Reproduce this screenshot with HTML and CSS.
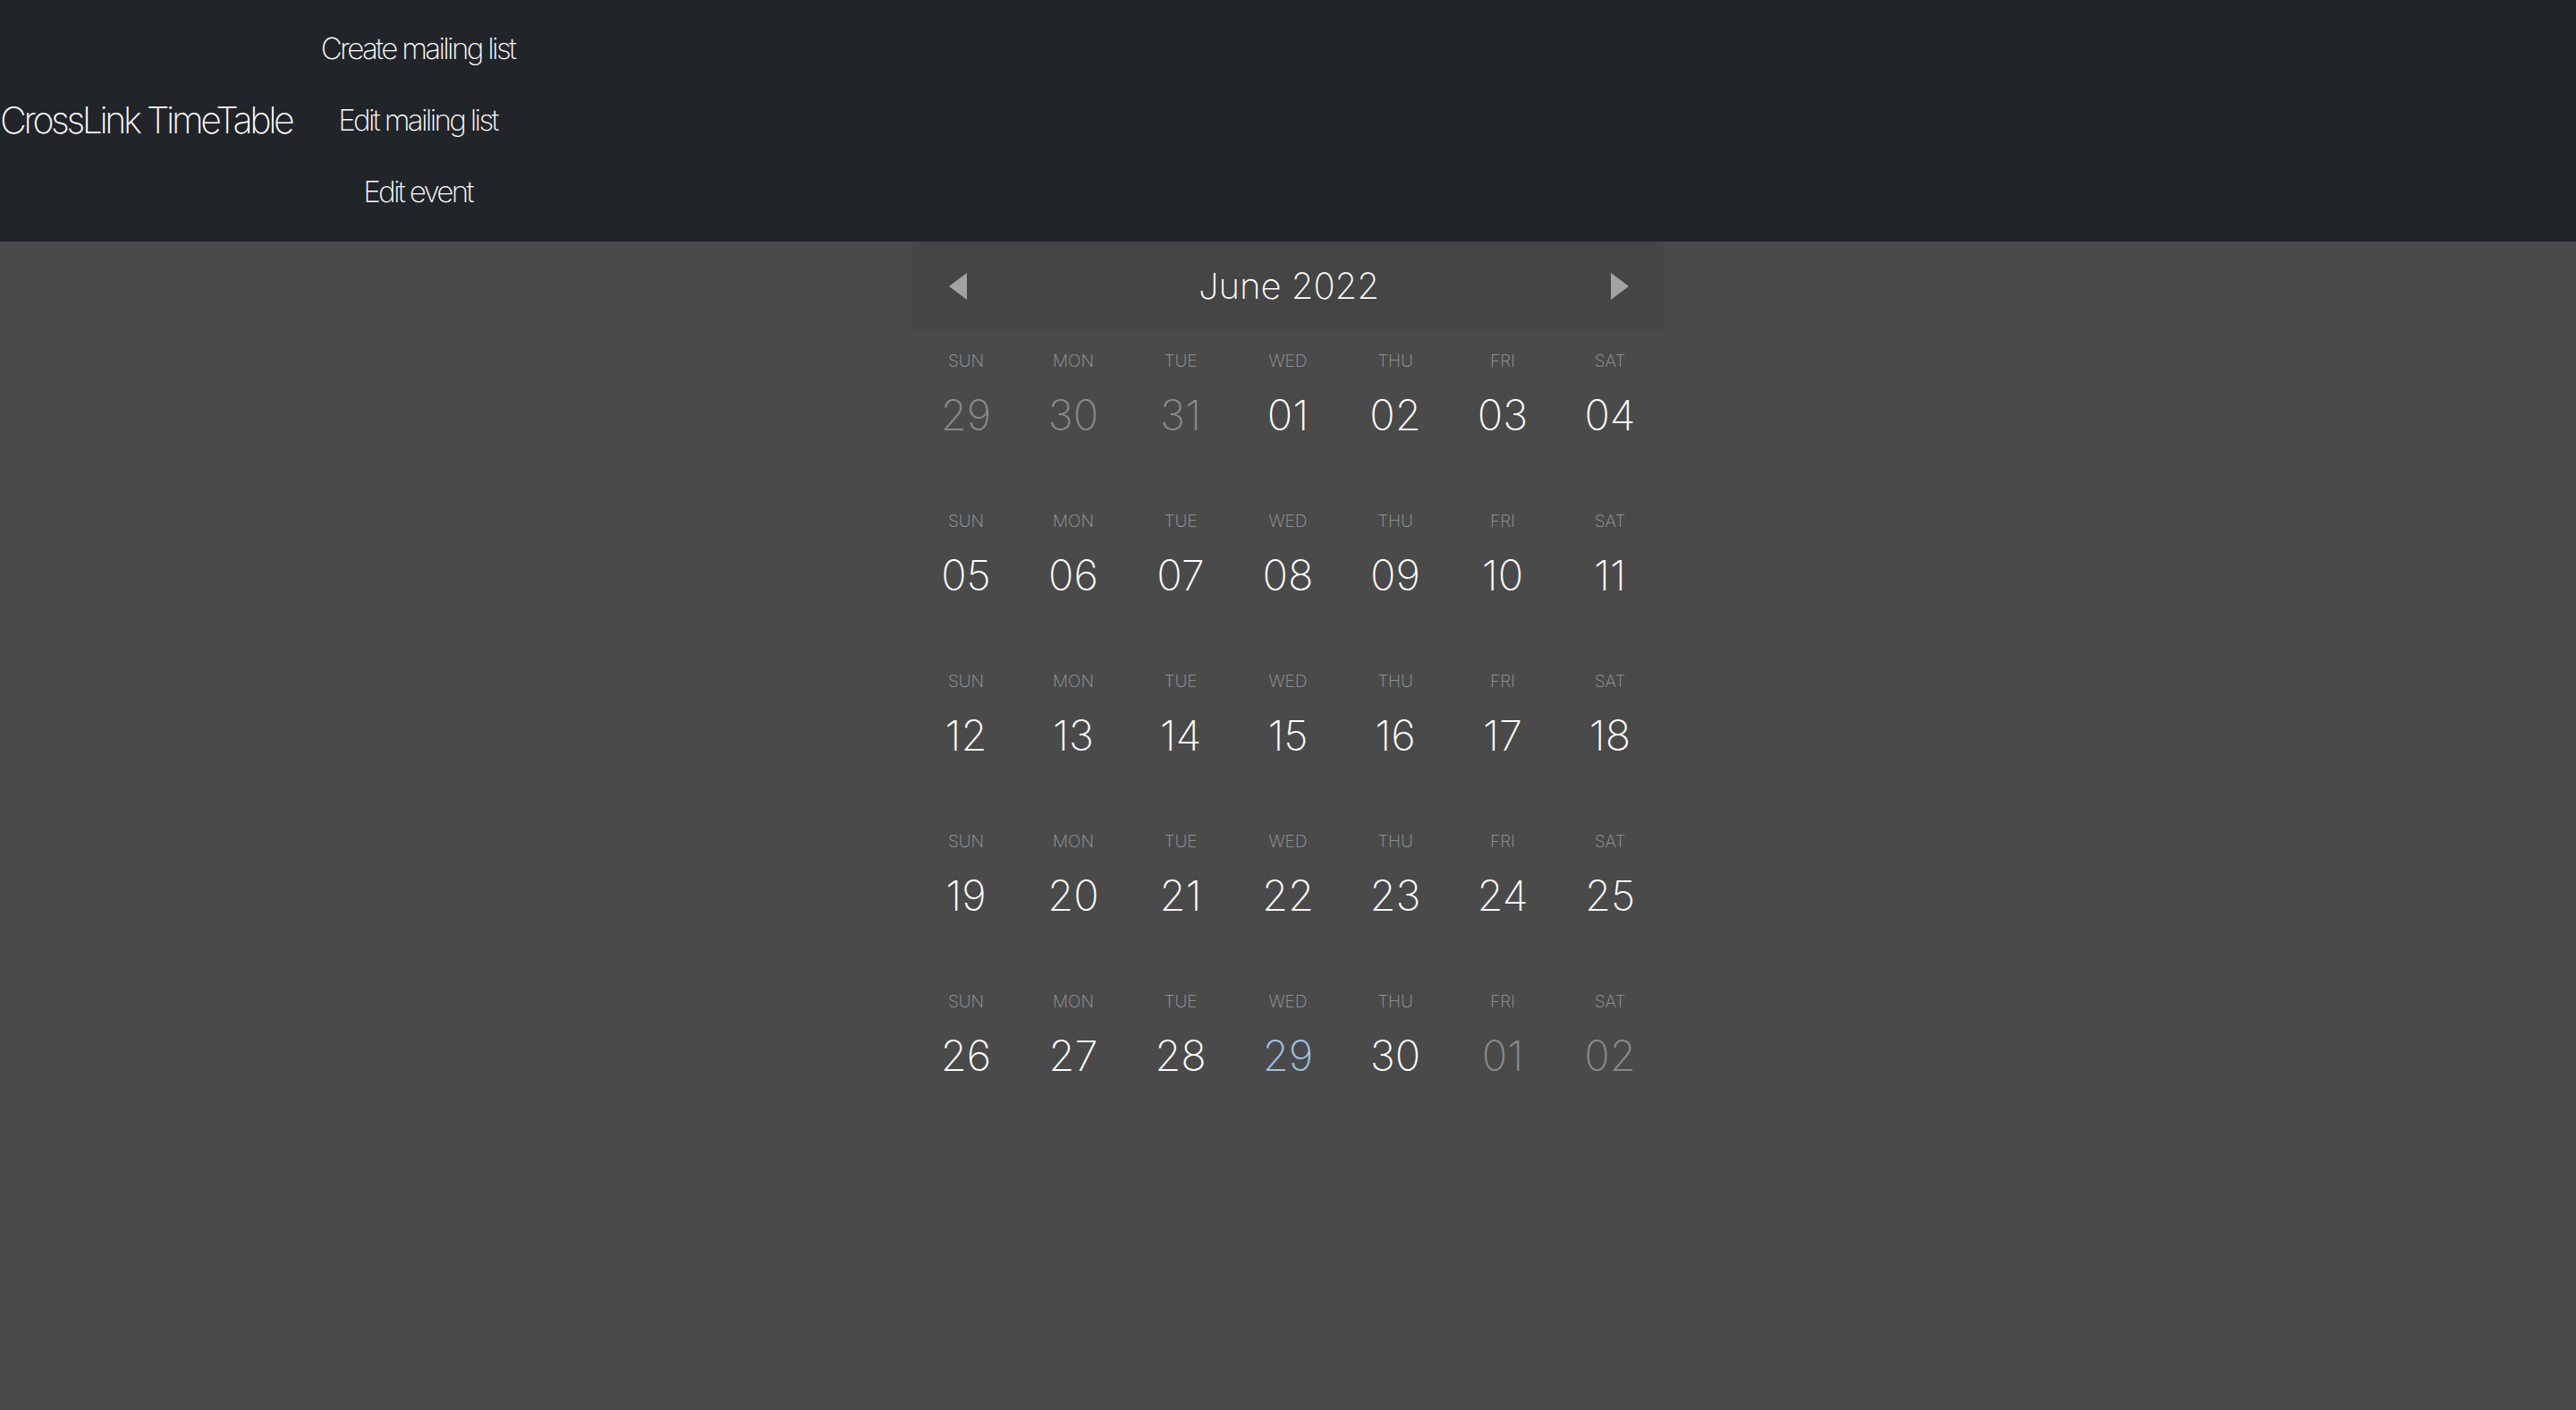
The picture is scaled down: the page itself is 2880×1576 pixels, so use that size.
FILE: index.html
```html
<!DOCTYPE html>
<html lang="en">
<head>
<meta charset="utf-8">
<title>CrossLink TimeTable</title>
<link rel="stylesheet" href="styles.css">
</head>
<body>
<header class="topbar">
  <a class="brand">CrossLink TimeTable</a>
  <ul class="nav">
    <li><a class="nav-link">Create mailing list</a></li>
    <li><a class="nav-link">Edit mailing list</a></li>
    <li><a class="nav-link">Edit event</a></li>
  </ul>
</header>
<main class="calendar">
  <div class="cal-head">
    <button class="arrow prev" aria-label="Previous month">
      <svg viewBox="0 0 20 30" width="20" height="30"><polygon points="20,0 20,30 0,15"/></svg>
    </button>
    <div class="cal-title">June 2022</div>
    <button class="arrow next" aria-label="Next month">
      <svg viewBox="0 0 20 30" width="20" height="30"><polygon points="0,0 0,30 20,15"/></svg>
    </button>
  </div>
  <div class="week">
    <div class="day muted"><span class="dow">SUN</span><span class="num">29</span></div>
    <div class="day muted"><span class="dow">MON</span><span class="num">30</span></div>
    <div class="day muted"><span class="dow">TUE</span><span class="num">31</span></div>
    <div class="day"><span class="dow">WED</span><span class="num">01</span></div>
    <div class="day"><span class="dow">THU</span><span class="num">02</span></div>
    <div class="day"><span class="dow">FRI</span><span class="num">03</span></div>
    <div class="day"><span class="dow">SAT</span><span class="num">04</span></div>
  </div>
  <div class="week">
    <div class="day"><span class="dow">SUN</span><span class="num">05</span></div>
    <div class="day"><span class="dow">MON</span><span class="num">06</span></div>
    <div class="day"><span class="dow">TUE</span><span class="num">07</span></div>
    <div class="day"><span class="dow">WED</span><span class="num">08</span></div>
    <div class="day"><span class="dow">THU</span><span class="num">09</span></div>
    <div class="day"><span class="dow">FRI</span><span class="num">10</span></div>
    <div class="day"><span class="dow">SAT</span><span class="num">11</span></div>
  </div>
  <div class="week">
    <div class="day"><span class="dow">SUN</span><span class="num">12</span></div>
    <div class="day"><span class="dow">MON</span><span class="num">13</span></div>
    <div class="day"><span class="dow">TUE</span><span class="num">14</span></div>
    <div class="day"><span class="dow">WED</span><span class="num">15</span></div>
    <div class="day"><span class="dow">THU</span><span class="num">16</span></div>
    <div class="day"><span class="dow">FRI</span><span class="num">17</span></div>
    <div class="day"><span class="dow">SAT</span><span class="num">18</span></div>
  </div>
  <div class="week">
    <div class="day"><span class="dow">SUN</span><span class="num">19</span></div>
    <div class="day"><span class="dow">MON</span><span class="num">20</span></div>
    <div class="day"><span class="dow">TUE</span><span class="num">21</span></div>
    <div class="day"><span class="dow">WED</span><span class="num">22</span></div>
    <div class="day"><span class="dow">THU</span><span class="num">23</span></div>
    <div class="day"><span class="dow">FRI</span><span class="num">24</span></div>
    <div class="day"><span class="dow">SAT</span><span class="num">25</span></div>
  </div>
  <div class="week">
    <div class="day"><span class="dow">SUN</span><span class="num">26</span></div>
    <div class="day"><span class="dow">MON</span><span class="num">27</span></div>
    <div class="day"><span class="dow">TUE</span><span class="num">28</span></div>
    <div class="day today"><span class="dow">WED</span><span class="num">29</span></div>
    <div class="day"><span class="dow">THU</span><span class="num">30</span></div>
    <div class="day muted"><span class="dow">FRI</span><span class="num">01</span></div>
    <div class="day muted"><span class="dow">SAT</span><span class="num">02</span></div>
  </div>
</main>
</body>
</html>
```
FILE: styles.css
```css
html, body {
  margin: 0;
  padding: 0;
}
body {
  background: #4a4a4a;
  color: #fff;
  font-family: Inter, "Liberation Sans", sans-serif;
  font-weight: 200;
  min-height: 1576px;
}
.topbar {
  background: #212529;
  height: 270px;
  box-sizing: border-box;
  padding: 14px 0 16px 0;
  display: flex;
  align-items: center;
}
.brand {
  width: 327px;
  font-size: 41px;
  line-height: 50px;
  font-weight: 150;
  letter-spacing: -3.35px;
  white-space: nowrap;
  color: #fff;
}
.nav {
  list-style: none;
  margin: 0 0 0 20px;
  padding: 0;
  width: 240px;
  display: flex;
  flex-direction: column;
}
.nav li {
  height: 80px;
  display: flex;
  align-items: center;
  justify-content: center;
}
.nav-link {
  font-size: 33px;
  font-weight: 150;
  letter-spacing: -2.6px;
  white-space: nowrap;
  color: #fff;
}
.calendar {
  width: 840px;
  margin: 0 auto;
}
.cal-head {
  height: 100px;
  background: #454545;
  display: flex;
  align-items: center;
  justify-content: space-between;
  padding: 0 39px 0 41px;
}
.arrow {
  border: 0;
  background: none;
  padding: 0;
  width: 20px;
  height: 30px;
  display: flex;
}
.arrow svg {
  fill: #a3a3a3;
}
.cal-title {
  font-size: 40px;
  line-height: 50px;
  color: #fff;
}
.week {
  display: grid;
  grid-template-columns: repeat(7, 1fr);
  height: 179px;
}
.day {
  display: flex;
  flex-direction: column;
  align-items: center;
  padding-top: 22px;
}
.dow {
  font-size: 19px;
  line-height: 24px;
  font-weight: 200;
  color: #9a9a9a;
}
.num {
  margin-top: 20px;
  font-size: 47px;
  line-height: 56px;
  font-weight: 180;
  color: #fff;
}
.muted .num {
  color: #8a8a8a;
}
.today .num {
  color: #9fc4e6;
}
```
